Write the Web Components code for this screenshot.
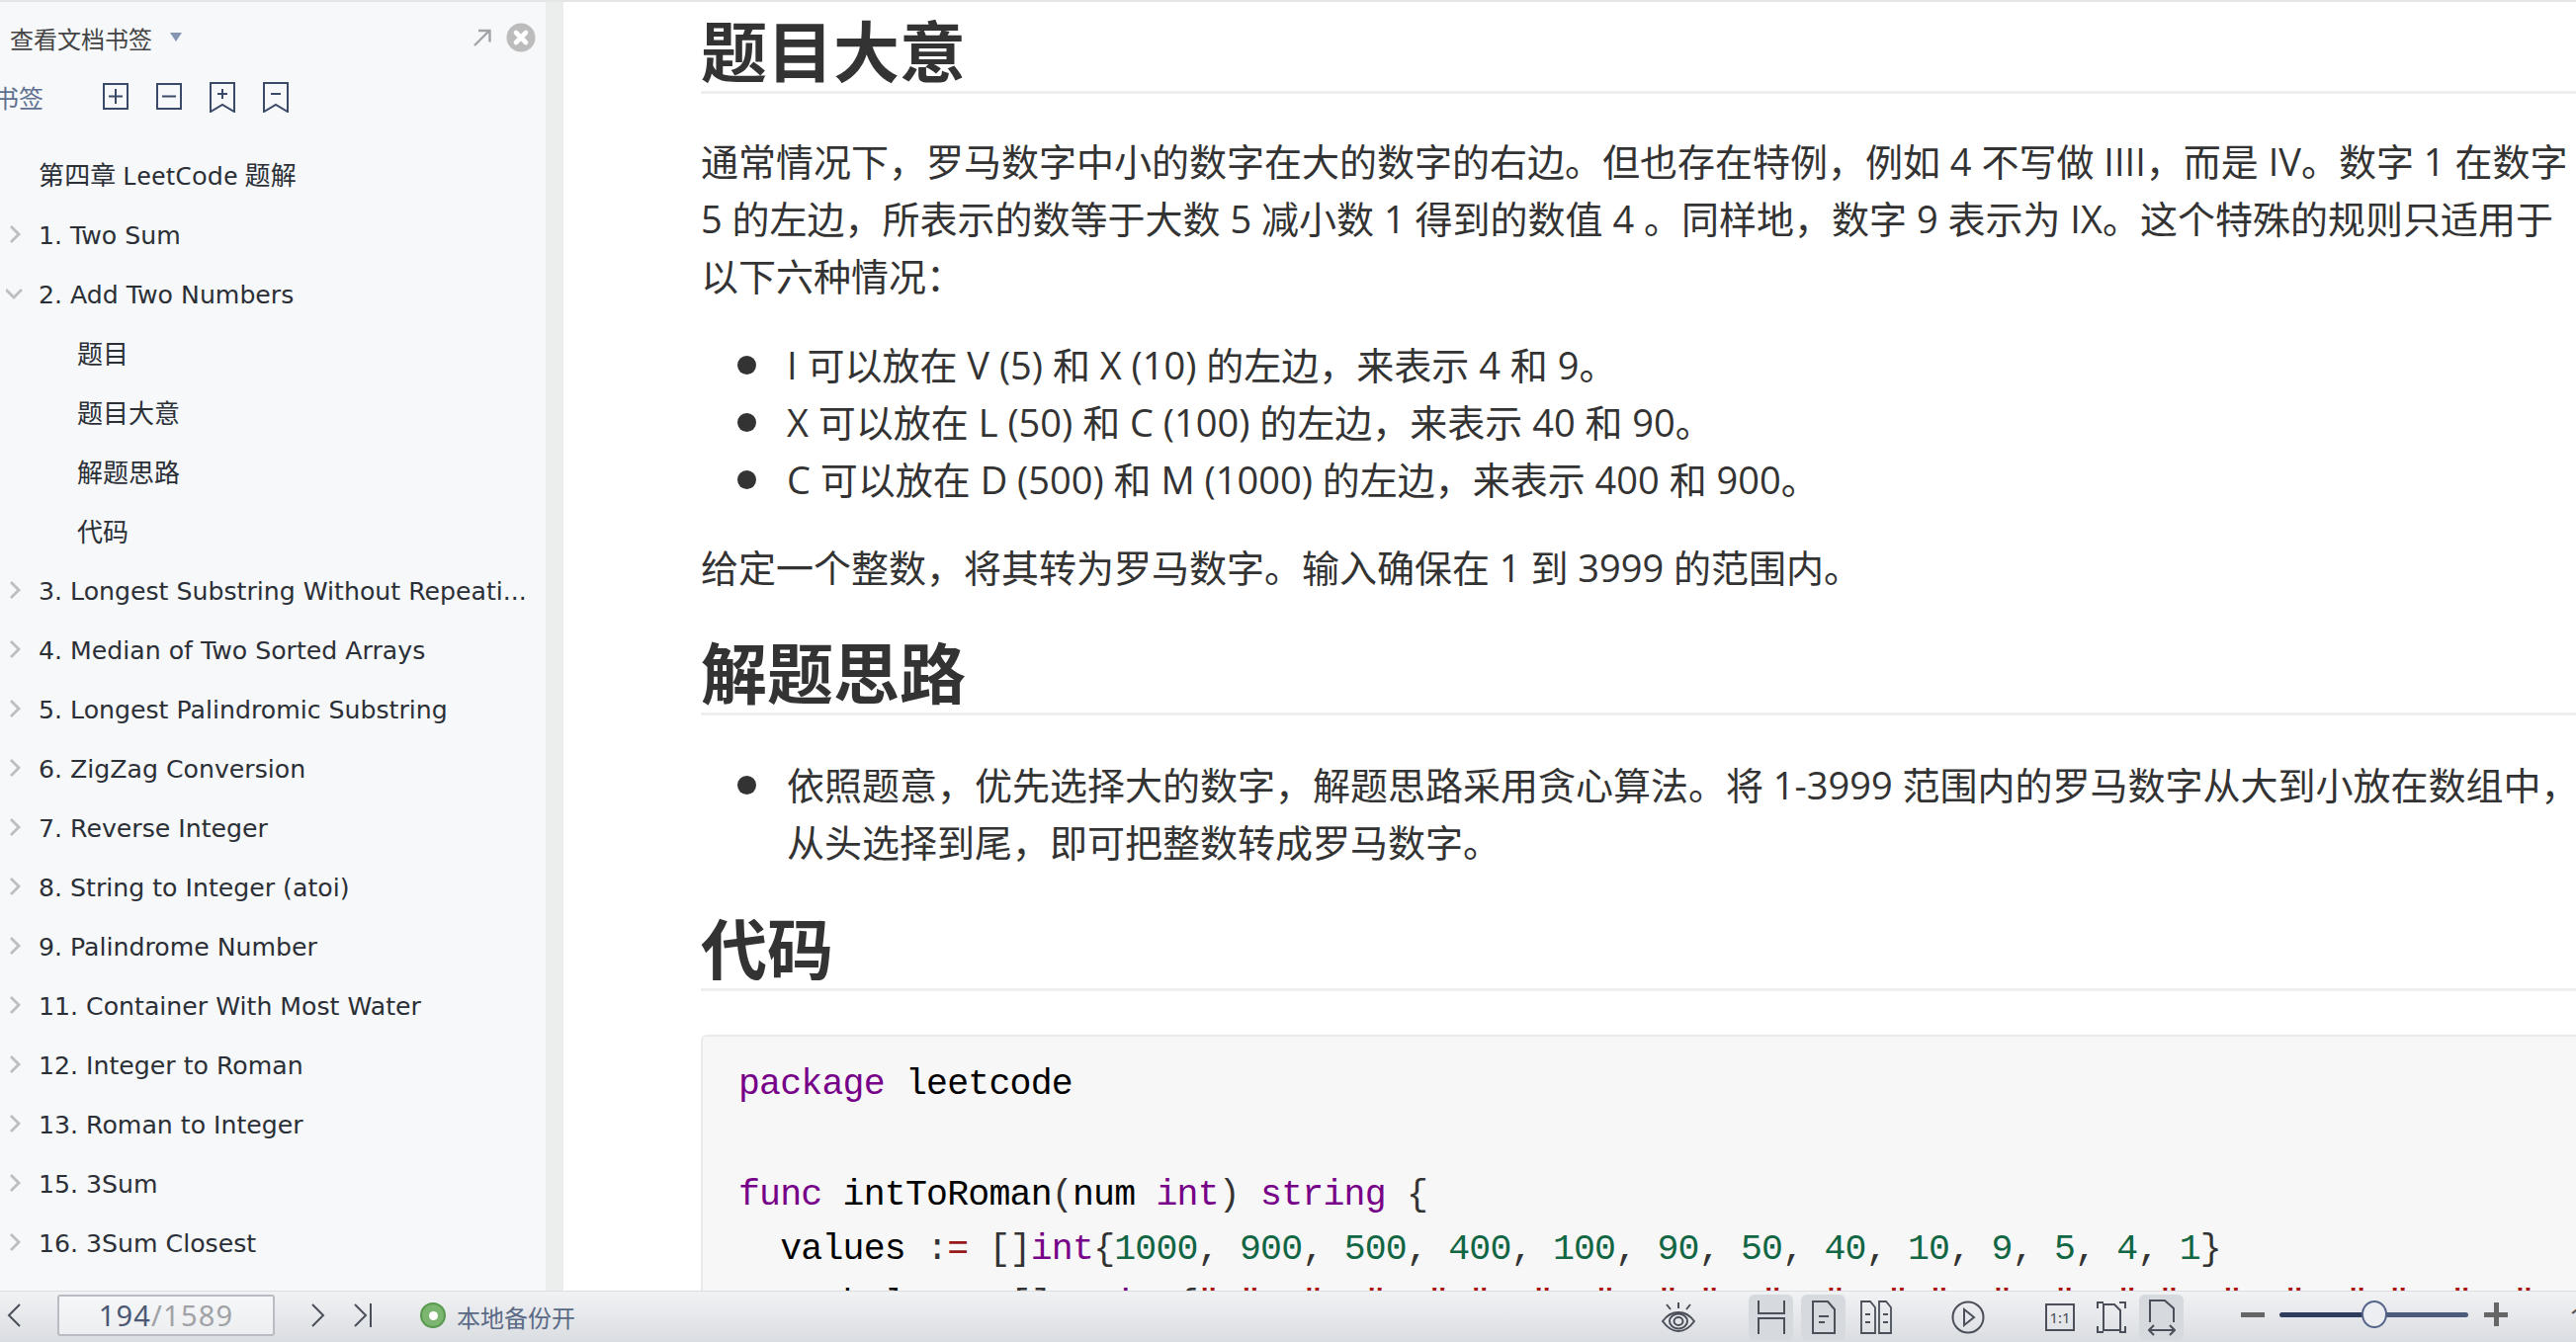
<!DOCTYPE html>
<html lang="zh"><head><meta charset="utf-8"><title>Bookmarks</title>
<style>
html,body{margin:0;height:100%;overflow:hidden;background:#fff}
body{font-family:"Open Sans","Noto Sans CJK SC",sans-serif}
</style></head><body>
<app-shell>
  <bookmark-panel slot="side">
    <bookmark-row cjk>第四章 LeetCode 题解</bookmark-row>
    <bookmark-row state="closed">1. Two Sum</bookmark-row>
    <bookmark-row state="open">2. Add Two Numbers</bookmark-row>
    <bookmark-row sub>题目</bookmark-row>
    <bookmark-row sub>题目大意</bookmark-row>
    <bookmark-row sub>解题思路</bookmark-row>
    <bookmark-row sub>代码</bookmark-row>
    <bookmark-row state="closed">3. Longest Substring Without Repeati...</bookmark-row>
    <bookmark-row state="closed">4. Median of Two Sorted Arrays</bookmark-row>
    <bookmark-row state="closed">5. Longest Palindromic Substring</bookmark-row>
    <bookmark-row state="closed">6. ZigZag Conversion</bookmark-row>
    <bookmark-row state="closed">7. Reverse Integer</bookmark-row>
    <bookmark-row state="closed">8. String to Integer (atoi)</bookmark-row>
    <bookmark-row state="closed">9. Palindrome Number</bookmark-row>
    <bookmark-row state="closed">11. Container With Most Water</bookmark-row>
    <bookmark-row state="closed">12. Integer to Roman</bookmark-row>
    <bookmark-row state="closed">13. Roman to Integer</bookmark-row>
    <bookmark-row state="closed">15. 3Sum</bookmark-row>
    <bookmark-row state="closed">16. 3Sum Closest</bookmark-row>
  </bookmark-panel>
  <doc-view slot="main"></doc-view>
  <status-bar slot="bar"></status-bar>
</app-shell>
<script>
function def(name, css, html){
  customElements.define(name, class extends HTMLElement{
    connectedCallback(){
      if(this.shadowRoot) return;
      const r=this.attachShadow({mode:'open'});
      r.innerHTML='<style>'+css+'</style>'+(typeof html==='function'?html(this):html);
    }
  });
}
def('app-shell',`
:host{display:flex;flex-direction:column;height:100vh;overflow:hidden}
.top{height:2px;background:#e4e5e7;flex:none}
.mid{flex:1;display:flex;min-height:0}
.bar{flex:none}
`,`<div class="top"></div><div class="mid"><slot name="side"></slot><slot name="main"></slot></div><div class="bar"><slot name="bar"></slot></div>`);

def('bookmark-panel',`
:host{display:block;width:552px;flex:none;background:#f6f8fa;color:#2b2b2b;position:relative;overflow:hidden;box-sizing:content-box;border-right:18px solid #e4e5e7;border-image:linear-gradient(90deg,#d4d5d8,#eceded) 1;font-size:24px}
.head{display:flex;align-items:center;height:72px;padding-left:10px;color:#444}
.title{font-size:24px}
.tri{margin-left:18px;margin-top:-2px;width:0;height:0;border-left:6px solid transparent;border-right:6px solid transparent;border-top:9px solid #8395b0}
.sp{flex:1}
.tools{display:flex;align-items:center;height:48px;position:relative;margin-left:-6px}
.bm{font-size:25px;color:#5f7190;width:107px;flex:none}
.tools svg{width:32px;height:32px;margin-right:22px;display:block;flex:none}
.tools svg{fill:none;stroke:#3b4a68;stroke-width:2}
.list{padding-top:24px}
.arrow{margin-right:14px;display:block}
.x{margin-right:10px;display:block}
`,`<div class="head"><span class="title">查看文档书签</span><span class="tri"></span><span class="sp"></span>
<svg class="arrow" width="20" height="20" viewBox="0 0 20 20"><path d="M2 18 17 3M6 3h11.500v11.500" fill="none" stroke="#a2a4a8" stroke-width="2.400"/></svg>
<svg class="x" width="30" height="30" viewBox="0 0 30 30"><circle cx="15" cy="15" r="14.500" fill="#bcbcbc"/><path d="M10 10 20 20M20 10 10 20" stroke="#fff" stroke-width="4.600" stroke-linecap="round"/></svg></div>
<div class="tools"><span class="bm">书签</span>
<svg viewBox="0 0 32 32"><rect x="4" y="3" width="24" height="25"/><path d="M16 8v15M9 15.500h14"/></svg>
<svg viewBox="0 0 32 32"><rect x="4" y="3" width="24" height="25"/><path d="M9 15.500h14"/></svg>
<svg viewBox="0 0 32 32"><path d="M4 2h24v29l-12-7-12 7z"/><path d="M16 8v10M11 13h10"/></svg>
<svg viewBox="0 0 32 32"><path d="M4 2h24v29l-12-7-12 7z"/><path d="M11 13h10"/></svg></div>
<div class="list"><slot></slot></div>`);

def('bookmark-row',`
:host{display:flex;align-items:center;height:60px;box-sizing:border-box;padding:5px 0 0 39px;position:relative;font-size:25.200px;white-space:nowrap;color:#2b2f36;font-family:"DejaVu Sans","Noto Sans CJK SC",sans-serif}
:host([sub]){padding:0 0 0 78px;font-size:26px;font-family:"Noto Sans CJK SC",sans-serif}
:host([cjk]){padding:0 0 0 39px;font-size:26px;letter-spacing:.15px;font-family:"Noto Sans","Noto Sans CJK SC",sans-serif}
svg{position:absolute;left:6px;top:22px;width:20px;height:18px}
`,el=>{
  const s=el.getAttribute('state');
  let i='';
  if(s==='closed') i='<svg viewBox="0 0 20 18"><path d="M5 1l8 8-8 8" fill="none" stroke="#bdbec0" stroke-width="2.800"/></svg>';
  if(s==='open') i='<svg viewBox="0 0 20 18"><path d="M0 5l8 8 8-8" fill="none" stroke="#bdbec0" stroke-width="2.800"/></svg>';
  return i+'<slot></slot>';
});

def('doc-heading',`
:host{display:block;font-size:67px;font-weight:700;padding-top:8px;line-height:80px;color:#333;border-bottom:3px solid #eee;white-space:nowrap;box-sizing:content-box;height:80px}
`,`<slot></slot>`);
def('doc-para',`
:host{display:block;font-size:38px;line-height:58px;color:#333;white-space:nowrap}
`,`<slot></slot>`);
def('doc-bullet',`
:host{display:block;font-size:38px;line-height:58px;color:#333;white-space:nowrap;padding-left:87px;position:relative}
:host::before{content:"";position:absolute;left:37px;top:20px;width:19px;height:19px;border-radius:50%;background:#333}
`,`<slot></slot>`);
def('code-block',`
:host{display:block;background:#f7f7f7;border:2px solid #e9eaec;border-radius:6px 0 0 6px;border-right:0;padding:21px 0 0 36px;font-family:"Liberation Mono",monospace;font-size:36.500px;letter-spacing:-.78px;line-height:55.800px;color:#000;white-space:pre;margin-right:-10px}
.k{color:#770088}.n{color:#116644}.o{color:#981a1a}.p{color:#333}.s{color:#aa1111}
`,`<span class="k">package</span> leetcode

<span class="k">func</span> intToRoman<span class="p">(</span>num <span class="k">int</span><span class="p">)</span> <span class="k">string</span> <span class="p">{</span>
  values <span class="p">:</span><span class="o">=</span> <span class="p">[]</span><span class="k">int</span><span class="p">{</span><span class="n">1000</span><span class="p">,</span> <span class="n">900</span><span class="p">,</span> <span class="n">500</span><span class="p">,</span> <span class="n">400</span><span class="p">,</span> <span class="n">100</span><span class="p">,</span> <span class="n">90</span><span class="p">,</span> <span class="n">50</span><span class="p">,</span> <span class="n">40</span><span class="p">,</span> <span class="n">10</span><span class="p">,</span> <span class="n">9</span><span class="p">,</span> <span class="n">5</span><span class="p">,</span> <span class="n">4</span><span class="p">,</span> <span class="n">1</span><span class="p">}</span>
  symbols <span class="p">:</span><span class="o">=</span> <span class="p">[]</span><span class="k">string</span><span class="p">{</span><span class="s">"M"</span><span class="p">,</span> <span class="s">"CM"</span><span class="p">,</span> <span class="s">"D"</span><span class="p">,</span> <span class="s">"CD"</span><span class="p">,</span> <span class="s">"C"</span><span class="p">,</span> <span class="s">"XC"</span><span class="p">,</span> <span class="s">"L"</span><span class="p">,</span> <span class="s">"XL"</span><span class="p">,</span> <span class="s">"X"</span><span class="p">,</span> <span class="s">"IX"</span><span class="p">,</span> <span class="s">"V"</span><span class="p">,</span> <span class="s">"IV"</span><span class="p">,</span> <span class="s">"I"</span><span class="p">}</span>`);

def('doc-view',`
:host{display:block;flex:1;min-width:0;overflow:hidden;background:#fff;padding:2px 0 0 139px;font-family:"Open Sans","Noto Sans CJK SC",sans-serif}
doc-para,doc-bullet,doc-heading{margin:0}
.g1{margin-top:39px}.g2{margin-top:32px}.g3{margin-top:31px}.g4{margin-top:30px}.g5{margin-top:41px}.g6{margin-top:31px}.g7{margin-top:44px}
`,`<doc-heading>题目大意</doc-heading>
<doc-para class="g1">通常情况下，罗马数字中小的数字在大的数字的右边。但也存在特例，例如 4 不写做 IIII，而是 IV。数字 1 在数字<br>5 的左边，所表示的数等于大数 5 减小数 1 得到的数值 4 。同样地，数字 9 表示为 IX。这个特殊的规则只适用于<br>以下六种情况：</doc-para>
<div class="g2"><doc-bullet>I 可以放在 V (5) 和 X (10) 的左边，来表示 4 和 9。</doc-bullet>
<doc-bullet>X 可以放在 L (50) 和 C (100) 的左边，来表示 40 和 90。</doc-bullet>
<doc-bullet>C 可以放在 D (500) 和 M (1000) 的左边，来表示 400 和 900。</doc-bullet></div>
<doc-para class="g3">给定一个整数，将其转为罗马数字。输入确保在 1 到 3999 的范围内。</doc-para>
<doc-heading class="g4">解题思路</doc-heading>
<doc-bullet class="g5">依照题意，优先选择大的数字，解题思路采用贪心算法。将 1-3999 范围内的罗马数字从大到小放在数组中，<br>从头选择到尾，即可把整数转成罗马数字。</doc-bullet>
<doc-heading class="g6">代码</doc-heading>
<code-block class="g7"></code-block>`);

def('status-bar',`
:host{display:flex;align-items:center;height:52px;box-sizing:border-box;border-top:1px solid #dcdde0;padding-bottom:3px;background:linear-gradient(#f1f2f4,#dadde1);position:relative;overflow:hidden;font-family:"Noto Sans","Noto Sans CJK SC",sans-serif}
svg{display:block;flex:none;fill:none;stroke:#4a4f59;stroke-width:2}
.in{width:220px;height:42px;box-sizing:border-box;border:2px solid #b9bcc3;border-radius:3px;background:linear-gradient(#f6f7f8,#eceef0);text-align:center;font-size:29px;letter-spacing:1.200px;line-height:38px;color:#4b5873;margin:0 36px 0 36px;flex:none}
.in i{font-style:normal;color:#a0a2a6}
.dot{width:26px;height:26px;margin-left:48px;flex:none;box-sizing:border-box;border-radius:50%;background:#7cb56f;border:2px solid #57994e;display:flex;align-items:center;justify-content:center}
.dot:after{content:"";width:9px;height:9px;border-radius:50%;background:#fff}
.lbl{font-size:24px;color:#5a6a85;margin-left:11px;margin-top:3px;white-space:nowrap;flex:none}
.tools{position:absolute;left:1680px;top:0;bottom:0;display:flex;align-items:center;width:940px}
.hl{width:45px;height:46px;border-radius:6px;background:#d6d9de;display:flex;align-items:center;justify-content:center;flex:none}
.track{width:191px;height:5px;flex:none;margin-left:15px;margin-top:-4px;position:relative;background:linear-gradient(90deg,#2f3d5c 50%,#4b5b7c 50%);border-radius:3px}
.knob{position:absolute;left:83px;top:-12px;width:26px;height:28px;box-sizing:border-box;border-radius:50%;border:2px solid #56658a;background:#eceef1}
.pm{flex:none;background:#666}
.pct{font-size:28px;color:#555;margin-left:62px;flex:none}
`,`<svg width="16" height="26" viewBox="0 0 16 26" style="margin-left:6px"><path d="M14 2 3 13l11 11"/></svg>
<div class="in">194<i>/1589</i></div>
<svg width="16" height="26" viewBox="0 0 16 26"><path d="M2 2l11 11L2 24"/></svg>
<svg width="20" height="26" viewBox="0 0 20 26" style="margin-left:27px"><path d="M2 2l11 11L2 24M18 1v24"/></svg>
<div class="dot"></div><span class="lbl">本地备份开</span>
<div class="tools">
<svg width="36" height="32" viewBox="0 0 36 32" style="margin-right:53px"><path d="M2 20c5-7 10-9 16-9s11 2 16 9c-5 7-10 10-16 10s-11-3-16-10z"/><ellipse cx="18" cy="20" rx="9" ry="7.500"/><ellipse cx="18" cy="20" rx="4.500" ry="4"/><path d="M18 1v6M6 3l4 5M30 3l-4 5"/></svg>
<div class="hl"><svg width="30" height="36" viewBox="0 0 30 36"><path d="M2 1v13h26V1M2 35V19h26v16"/></svg></div>
<div class="hl" style="margin-left:8px"><svg width="26" height="36" viewBox="0 0 26 36"><path d="M2 2h15l7 8v24H2zM8 17h10M8 23h6"/></svg></div>
<svg width="34" height="36" viewBox="0 0 34 36" style="margin-left:14px"><path d="M2 2h9l5 6v26H2zM20 2h7l5 6v26H20zM6 15h5M6 23h5M24 15h5M24 23h5" stroke-width="1.800"/></svg>
<svg width="34" height="34" viewBox="0 0 34 34" style="margin-left:59px"><circle cx="17" cy="17" r="15.500"/><path d="M13 9l10 8-10 8z"/></svg>
<svg width="30" height="28" viewBox="0 0 30 28" style="margin-left:61px"><rect x="1" y="1" width="28" height="26"/><text x="15" y="20" font-size="15" font-family="Noto Sans" text-anchor="middle" fill="#4a4f59" stroke="none">1:1</text></svg>
<svg width="30" height="32" viewBox="0 0 30 32" style="margin-left:22px"><path d="M1 7V1h6M23 1h6v6M1 25v6h6M29 25v6h-6M7 3h11l6 6v20H7z"/></svg>
<div class="hl" style="margin-left:13px"><svg width="28" height="38" viewBox="0 0 28 38"><path d="M2 24V2h15l9 8v14M1 32h26M6 27l-5 5 5 5M22 27l5 5-5 5"/></svg></div>
<div class="pm" style="width:24px;height:5px;margin-left:58px;margin-top:-4px"></div>
<div class="track"><div class="knob"></div></div>
<div class="pm" style="width:24px;height:5px;margin-left:16px;margin-top:-4px;position:relative"><div class="pm" style="position:absolute;left:10px;top:-10px;width:5px;height:24px"></div></div>
<span class="pct">100%</span>
</div>`);
</script>
</body></html>
